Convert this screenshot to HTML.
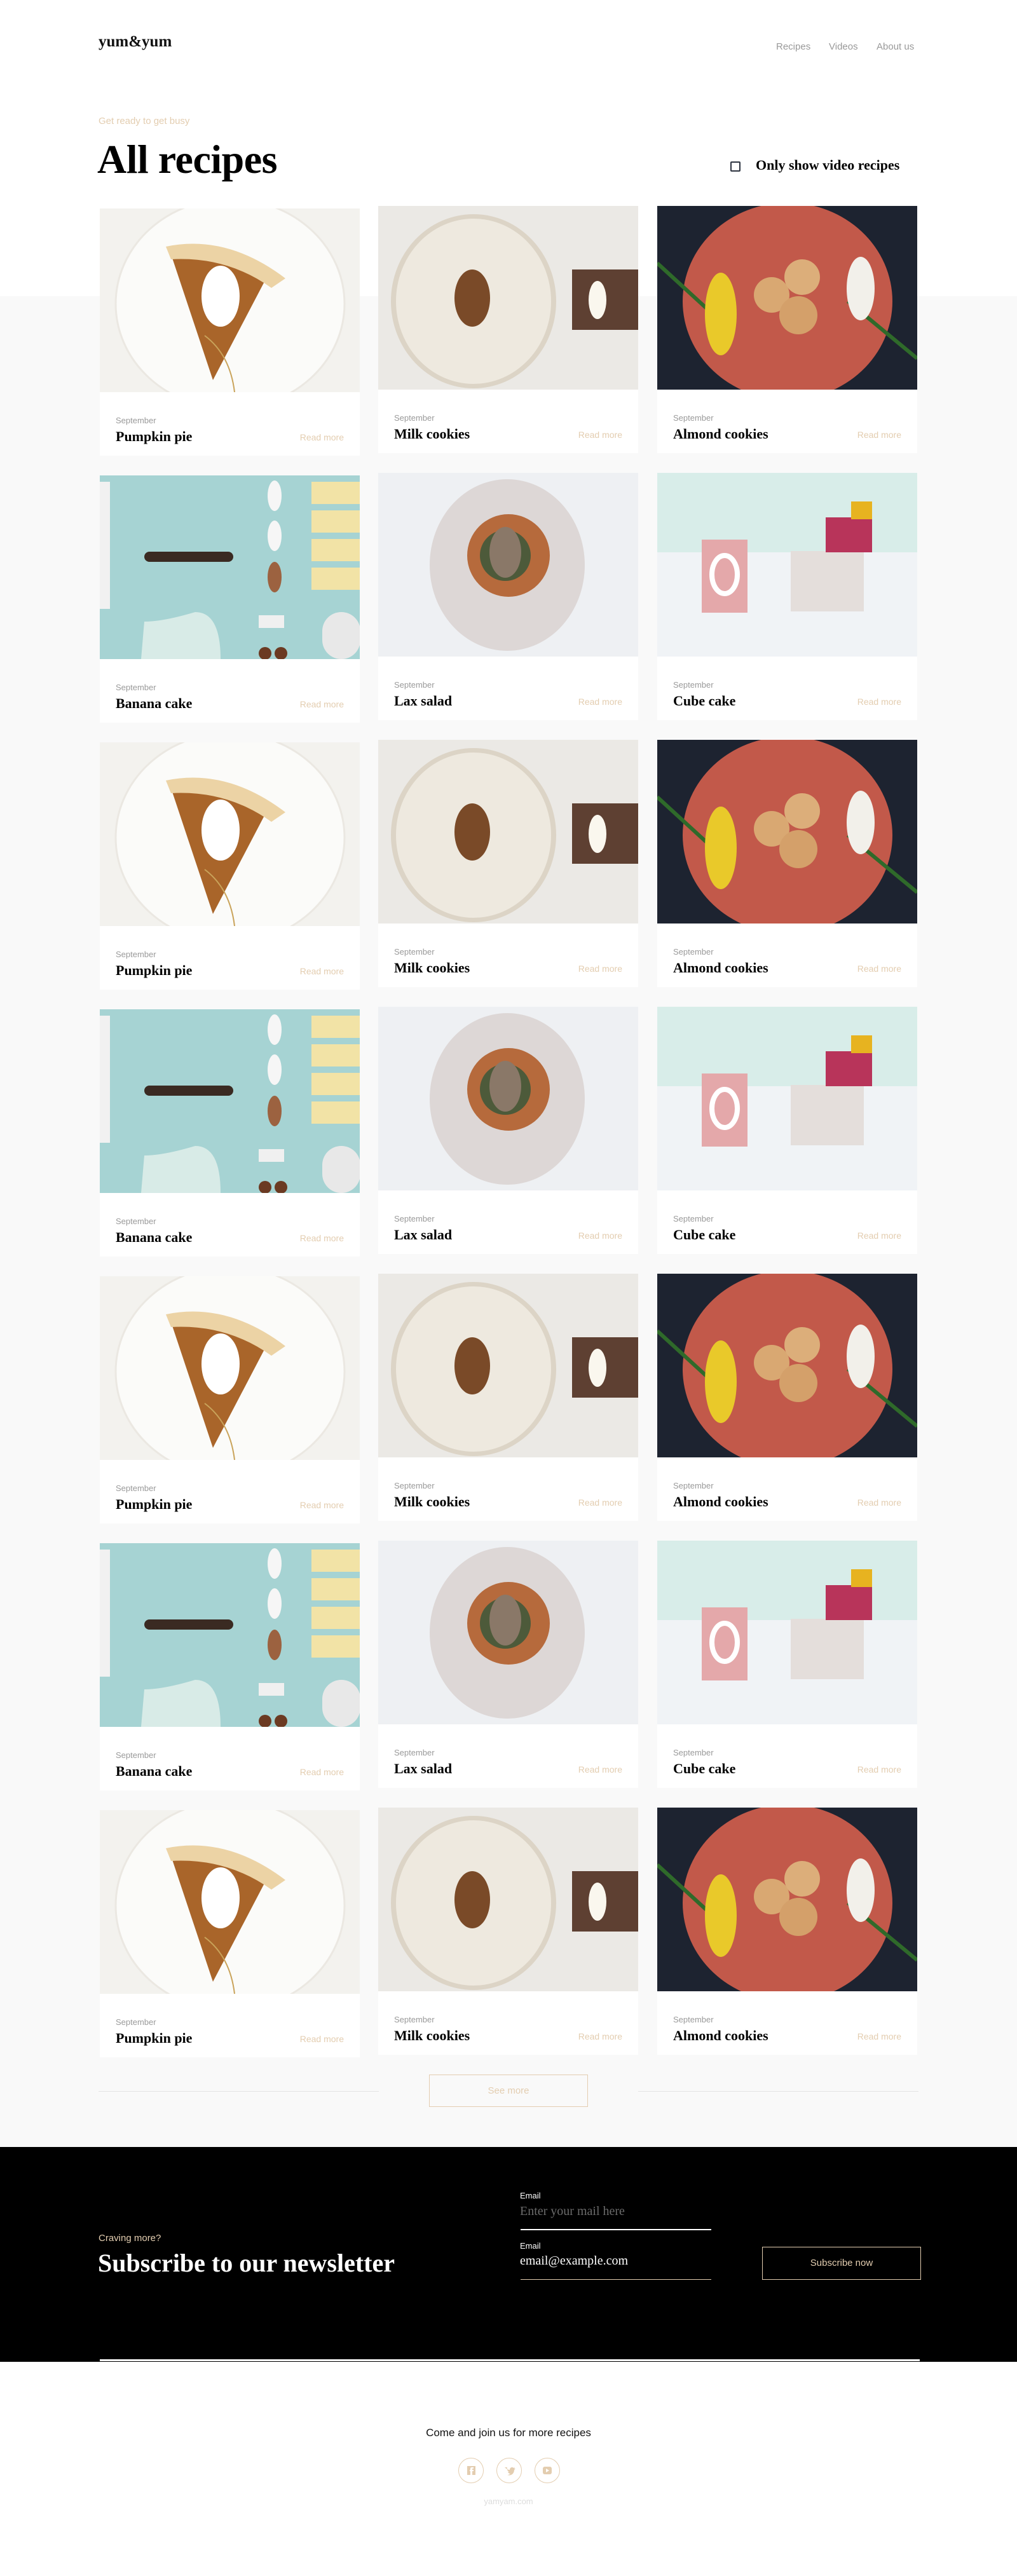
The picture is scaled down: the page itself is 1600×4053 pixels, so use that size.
<!DOCTYPE html>
<html><head><meta charset="utf-8"><style>
*{margin:0;padding:0;box-sizing:border-box}
body{width:1600px;height:4053px;background:#fff;font-family:"Liberation Sans",sans-serif;position:relative;overflow:hidden}
.abs{position:absolute}
.serif{font-family:"Liberation Serif",serif;font-weight:bold}
.grey{position:absolute;left:0;top:466px;width:1600px;height:2912px;background:#f9f9f9}
.card{position:absolute;width:409px;height:389px;background:#fff;overflow:hidden}
.card svg{position:absolute;left:0;top:0;width:409px;height:289px;display:block}
.mon{position:absolute;left:25px;top:326px;font-size:13px;color:#9a9a9a}
.ttl{position:absolute;left:25px;top:346px;font-size:22px;color:#000;font-family:"Liberation Serif",serif;font-weight:bold}
.rm{position:absolute;right:25px;top:352px;font-size:14px;color:#e3cdb0}
.c0{left:157px}.c1{left:595px}.c2{left:1034px}
</style></head><body>
<svg width="0" height="0" style="position:absolute">
<defs>
<symbol id="pie" viewBox="0 0 409 289"><rect width="409" height="289" fill="#f3f2ee"/><ellipse cx="205" cy="150" rx="180" ry="165" fill="#fbfbf9" stroke="#ebe8e2" stroke-width="3"/><polygon points="112,72 268,98 178,270" fill="#a9652a"/><path d="M104,60 Q200,40 292,110 L270,125 Q200,75 112,80 Z" fill="#ecd3a5"/><ellipse cx="190" cy="138" rx="30" ry="48" fill="#fff"/><path d="M165,200 Q205,230 212,289" stroke="#c9a35a" stroke-width="2" fill="none"/></symbol>
<symbol id="milk" viewBox="0 0 409 289"><rect width="409" height="289" fill="#ebe9e5"/><rect x="305" y="100" width="104" height="95" fill="#5e4032"/><ellipse cx="345" cy="148" rx="14" ry="30" fill="#faf7ee"/><ellipse cx="150" cy="150" rx="130" ry="137" fill="#dcd4c6"/><ellipse cx="150" cy="150" rx="122" ry="130" fill="#eee9df"/><ellipse cx="148" cy="145" rx="28" ry="45" fill="#7a4a28"/></symbol>
<symbol id="alm" viewBox="0 0 409 289"><rect width="409" height="289" fill="#1d2330"/><ellipse cx="205" cy="150" rx="165" ry="155" fill="#c2594a"/><line x1="0" y1="90" x2="120" y2="200" stroke="#2f6a2a" stroke-width="6"/><line x1="300" y1="150" x2="409" y2="240" stroke="#2f6a2a" stroke-width="6"/><circle cx="180" cy="140" r="28" fill="#d9a872"/><circle cx="228" cy="112" r="28" fill="#dcae7a"/><circle cx="222" cy="172" r="30" fill="#d4a06a"/><ellipse cx="100" cy="170" rx="25" ry="65" fill="#e9c92a"/><ellipse cx="320" cy="130" rx="22" ry="50" fill="#f2f0ea"/></symbol>
<symbol id="ban" viewBox="0 0 409 289"><rect width="409" height="289" fill="#a6d3d3"/><rect x="0" y="10" width="16" height="200" fill="#f1f1f1"/><rect x="333" y="10" width="76" height="35" fill="#f2e3a6"/><rect x="333" y="55" width="76" height="35" fill="#f2e3a6"/><rect x="333" y="100" width="76" height="35" fill="#f2e3a6"/><rect x="333" y="145" width="76" height="35" fill="#f2e3a6"/><ellipse cx="275" cy="32" rx="11" ry="24" fill="#f6f6f6"/><ellipse cx="275" cy="95" rx="11" ry="24" fill="#f6f6f6"/><ellipse cx="275" cy="160" rx="11" ry="24" fill="#9c6240"/><rect x="70" y="120" width="140" height="16" rx="8" fill="#3a2a22"/><path d="M65,289 L70,230 Q100,230 150,215 Q190,215 190,289 Z" fill="#d8ebe7"/><rect x="250" y="220" width="40" height="20" fill="#f0f0f0"/><rect x="350" y="215" width="60" height="74" rx="30" fill="#e8e8e8"/><circle cx="260" cy="280" r="10" fill="#6b3a22"/><circle cx="285" cy="280" r="10" fill="#6b3a22"/></symbol>
<symbol id="lax" viewBox="0 0 409 289"><rect width="409" height="289" fill="#eef0f3"/><ellipse cx="203" cy="145" rx="122" ry="135" fill="#ddd7d6"/><circle cx="205" cy="130" r="65" fill="#b66a3c"/><circle cx="200" cy="130" r="40" fill="#4d5a3a"/><ellipse cx="200" cy="125" rx="25" ry="40" fill="#8a7868"/></symbol>
<symbol id="cube" viewBox="0 0 409 289"><rect width="409" height="289" fill="#f0f3f6"/><rect width="409" height="125" fill="#d8ede9"/><rect x="70" y="105" width="72" height="115" fill="#e4a8aa"/><ellipse cx="106" cy="160" rx="20" ry="30" fill="none" stroke="#fff" stroke-width="8"/><rect x="210" y="123" width="115" height="95" fill="#e4dedb"/><rect x="265" y="70" width="73" height="55" fill="#b8345a"/><rect x="305" y="45" width="33" height="28" fill="#e7b320"/></symbol>
</defs></svg>
<div class="grey"></div>
<div class="abs serif" style="left:155px;top:52px;font-size:25px;color:#111">yum&amp;yum</div>
<div class="abs" style="left:1221px;top:65px;font-size:15px;color:#999">Recipes</div>
<div class="abs" style="left:1304px;top:65px;font-size:15px;color:#999">Videos</div>
<div class="abs" style="left:1379px;top:65px;font-size:15px;color:#999">About us</div>
<div class="abs" style="left:155px;top:182px;font-size:15px;color:#e3cdb0">Get ready to get busy</div>
<div class="abs serif" style="left:153px;top:214px;font-size:64px;color:#000;letter-spacing:-0.5px">All recipes</div>
<div class="abs" style="left:1149px;top:254px;width:16px;height:16px;border:2px solid #2d3340;border-radius:2px"></div>
<div class="abs serif" style="left:1189px;top:247px;font-size:22px;color:#000">Only show video recipes</div>

<div class="card c0" style="top:328px"><svg><use href="#pie"/></svg><div class="mon">September</div><div class="ttl">Pumpkin pie</div><div class="rm">Read more</div></div>
<div class="card c1" style="top:324px"><svg><use href="#milk"/></svg><div class="mon">September</div><div class="ttl">Milk cookies</div><div class="rm">Read more</div></div>
<div class="card c2" style="top:324px"><svg><use href="#alm"/></svg><div class="mon">September</div><div class="ttl">Almond cookies</div><div class="rm">Read more</div></div>

<div class="card c0" style="top:748px"><svg><use href="#ban"/></svg><div class="mon">September</div><div class="ttl">Banana cake</div><div class="rm">Read more</div></div>
<div class="card c1" style="top:744px"><svg><use href="#lax"/></svg><div class="mon">September</div><div class="ttl">Lax salad</div><div class="rm">Read more</div></div>
<div class="card c2" style="top:744px"><svg><use href="#cube"/></svg><div class="mon">September</div><div class="ttl">Cube cake</div><div class="rm">Read more</div></div>

<div class="card c0" style="top:1168px"><svg><use href="#pie"/></svg><div class="mon">September</div><div class="ttl">Pumpkin pie</div><div class="rm">Read more</div></div>
<div class="card c1" style="top:1164px"><svg><use href="#milk"/></svg><div class="mon">September</div><div class="ttl">Milk cookies</div><div class="rm">Read more</div></div>
<div class="card c2" style="top:1164px"><svg><use href="#alm"/></svg><div class="mon">September</div><div class="ttl">Almond cookies</div><div class="rm">Read more</div></div>

<div class="card c0" style="top:1588px"><svg><use href="#ban"/></svg><div class="mon">September</div><div class="ttl">Banana cake</div><div class="rm">Read more</div></div>
<div class="card c1" style="top:1584px"><svg><use href="#lax"/></svg><div class="mon">September</div><div class="ttl">Lax salad</div><div class="rm">Read more</div></div>
<div class="card c2" style="top:1584px"><svg><use href="#cube"/></svg><div class="mon">September</div><div class="ttl">Cube cake</div><div class="rm">Read more</div></div>

<div class="card c0" style="top:2008px"><svg><use href="#pie"/></svg><div class="mon">September</div><div class="ttl">Pumpkin pie</div><div class="rm">Read more</div></div>
<div class="card c1" style="top:2004px"><svg><use href="#milk"/></svg><div class="mon">September</div><div class="ttl">Milk cookies</div><div class="rm">Read more</div></div>
<div class="card c2" style="top:2004px"><svg><use href="#alm"/></svg><div class="mon">September</div><div class="ttl">Almond cookies</div><div class="rm">Read more</div></div>

<div class="card c0" style="top:2428px"><svg><use href="#ban"/></svg><div class="mon">September</div><div class="ttl">Banana cake</div><div class="rm">Read more</div></div>
<div class="card c1" style="top:2424px"><svg><use href="#lax"/></svg><div class="mon">September</div><div class="ttl">Lax salad</div><div class="rm">Read more</div></div>
<div class="card c2" style="top:2424px"><svg><use href="#cube"/></svg><div class="mon">September</div><div class="ttl">Cube cake</div><div class="rm">Read more</div></div>

<div class="card c0" style="top:2848px"><svg><use href="#pie"/></svg><div class="mon">September</div><div class="ttl">Pumpkin pie</div><div class="rm">Read more</div></div>
<div class="card c1" style="top:2844px"><svg><use href="#milk"/></svg><div class="mon">September</div><div class="ttl">Milk cookies</div><div class="rm">Read more</div></div>
<div class="card c2" style="top:2844px"><svg><use href="#alm"/></svg><div class="mon">September</div><div class="ttl">Almond cookies</div><div class="rm">Read more</div></div>

<div class="abs" style="left:155px;top:3290px;width:441px;height:1px;background:#e4e4e4"></div>
<div class="abs" style="left:1004px;top:3290px;width:441px;height:1px;background:#e4e4e4"></div>
<div class="abs" style="left:675px;top:3264px;width:250px;height:51px;border:1px solid #e3cdb0;color:#e3cdb0;font-size:15px;text-align:center;line-height:49px">See more</div>

<div class="abs" style="left:0;top:3378px;width:1600px;height:338px;background:#000"></div>
<div class="abs" style="left:157px;top:3712px;width:1290px;height:3px;background:#fff"></div>
<div class="abs" style="left:155px;top:3513px;font-size:15px;color:#e3cdb0">Craving more?</div>
<div class="abs serif" style="left:154px;top:3537px;font-size:40px;color:#fff">Subscribe to our newsletter</div>
<div class="abs" style="left:818px;top:3447px;font-size:13px;color:#fff">Email</div>
<div class="abs serif" style="left:818px;top:3468px;font-size:20px;color:#6a6a6a;font-weight:normal">Enter your mail here</div>
<div class="abs" style="left:819px;top:3507px;width:300px;height:2px;background:#fff"></div>
<div class="abs" style="left:818px;top:3526px;font-size:13px;color:#fff">Email</div>
<div class="abs serif" style="left:818px;top:3546px;font-size:20px;color:#fff;font-weight:normal">email@example.com</div>
<div class="abs" style="left:819px;top:3586px;width:300px;height:1px;background:#e3cdb0"></div>
<div class="abs" style="left:1199px;top:3535px;width:250px;height:52px;border:1px solid #e3cdb0;color:#e3cdb0;font-size:15px;text-align:center;line-height:50px">Subscribe now</div>

<div class="abs" style="left:0;top:3818px;width:1600px;text-align:center;font-size:17px;color:#111">Come and join us for more recipes</div>
<div class="abs" style="left:721px;top:3867px;width:40px;height:40px;border:1px solid #e3cdb0;border-radius:50%"><svg width="38" height="38" viewBox="0 0 38 38"><rect x="13" y="12" width="13" height="14" fill="#e3cdb0"/><path d="M21 26v-6h2v-2h-2v-2h2v-2h-3a2 2 0 0 0-2 2v2h-1v2h1v6z" fill="#fff"/></svg></div>
<div class="abs" style="left:781px;top:3867px;width:40px;height:40px;border:1px solid #e3cdb0;border-radius:50%"><svg width="38" height="38" viewBox="0 0 38 38"><path d="M12 14c3 3 6 4 8 4 0-4 4-5 6-3l2-1-1 2 2 0-2 2c0 6-5 10-11 8 2 0 4-1 5-2-2 0-3-1-4-3h2c-2-1-3-2-3-4l2 1c-2-1-3-3-2-4z" fill="#e3cdb0"/></svg></div>
<div class="abs" style="left:841px;top:3867px;width:40px;height:40px;border:1px solid #e3cdb0;border-radius:50%"><svg width="38" height="38" viewBox="0 0 38 38"><rect x="12" y="13" width="14" height="12" rx="3" fill="#e3cdb0"/><path d="M17 16v6l5-3z" fill="#fff"/></svg></div>
<div class="abs" style="left:0;top:3928px;width:1600px;text-align:center;font-size:13px;color:#ddd">yamyam.com</div>
</body></html>
